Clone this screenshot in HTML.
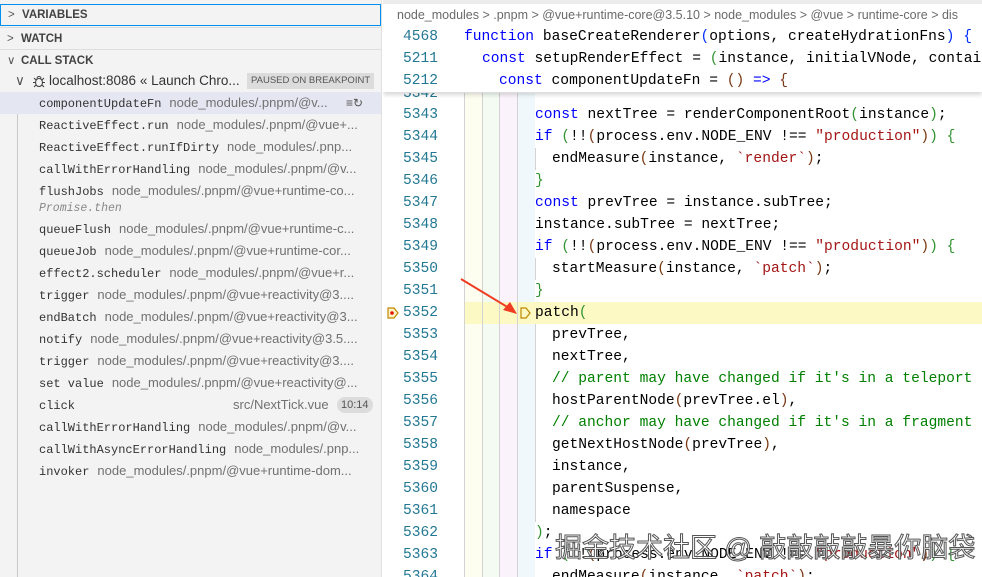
<!DOCTYPE html>
<html><head><meta charset="utf-8"><style>
*{margin:0;padding:0;box-sizing:border-box}
body{width:982px;height:577px;overflow:hidden;background:#fff;font-family:"Liberation Sans",sans-serif;position:relative}
#side{position:absolute;left:0;top:0;width:382px;height:577px;background:#f3f3f3;border-right:1px solid #e0e0e0;overflow:hidden}
.hdr{position:absolute;left:0;width:381px;height:22px;font-size:11.5px;font-weight:bold;color:#424242;line-height:22px;padding-left:21px}
.hdr .ch{position:absolute;left:7px;top:0;font-weight:normal;color:#555}
.row{position:absolute;left:0;width:381px;height:22px;line-height:22px;white-space:nowrap;font-size:13px;color:#717171}
.row .f{font-family:"Liberation Mono",monospace;font-size:12px;color:#333;margin-right:8px}
.row .n{position:absolute;left:39px;top:0}
.guide{position:absolute;left:17px;top:92px;width:1px;height:485px;background:#c8c8c8}
#ed{position:absolute;left:383px;top:0;width:599px;height:577px;overflow:hidden}
.ln{position:absolute;left:0;width:55px;text-align:right;font-family:"Liberation Mono",monospace;font-size:14.6px;color:#237893;line-height:22px;height:22px}
.code{position:absolute;left:0;white-space:pre;font-family:"Liberation Mono",monospace;font-size:14.6px;line-height:22px;height:22px;color:#000}
.k{color:#0000ff}.s{color:#a31515}.c{color:#008000}.b1{color:#0431fa}.b2{color:#319331}.b3{color:#7b3814}
.col{position:absolute;top:92px;height:485px}
.vl{position:absolute;top:92px;height:485px;width:1px;background:#d3d3d3}
#body{position:absolute;left:0;top:1px;width:599px;height:577px}
</style></head><body>
<div id="side">
 <div class="hdr" style="top:4px;border:1px solid #0090f1;height:22px;line-height:20px"><span class="ch">&gt;</span>VARIABLES</div>
 <div class="hdr" style="top:27px;border-top:1px solid #ddd"><span class="ch">&gt;</span>WATCH</div>
 <div class="hdr" style="top:49px;border-top:1px solid #ddd"><span class="ch">&#8744;</span>CALL STACK</div>
 <div class="row" style="top:70px;color:#333;font-size:13.5px"><span style="position:absolute;left:15px;color:#555">&#8744;</span><svg style="position:absolute;left:32px;top:4px" width="14" height="14" viewBox="0 0 14 14" fill="none" stroke="#424242" stroke-width="1.1"><ellipse cx="7" cy="8.5" rx="3.5" ry="4"/><path d="M5 4.5a2 2 0 0 1 4 0M1 8.5h2.5M10.5 8.5H13M2 4l2 2M12 4l-2 2M2 13l2-2M12 13l-2-2"/></svg><span style="position:absolute;left:49px">localhost:8086 « Launch Chro...</span><span style="position:absolute;left:247px;top:3px;height:16px;line-height:16px;background:#dcdcdc;font-size:9.5px;padding:0 4px;color:#555">PAUSED ON BREAKPOINT</span></div>
 <div class="guide"></div>
 <div class="row" style="top:92px;background:#e4e6f1"><span class="n"><span class="f">componentUpdateFn</span>node_modules/.pnpm/@v...</span><span style="position:absolute;left:346px;color:#555;font-size:12px">&#8801;&#8635;</span></div>
 <div class="row" style="top:114px"><span class="n"><span class="f">ReactiveEffect.run</span>node_modules/.pnpm/@vue+...</span></div>
 <div class="row" style="top:136px"><span class="n"><span class="f">ReactiveEffect.runIfDirty</span>node_modules/.pnp...</span></div>
 <div class="row" style="top:158px"><span class="n"><span class="f">callWithErrorHandling</span>node_modules/.pnpm/@v...</span></div>
 <div class="row" style="top:180px"><span class="n"><span class="f">flushJobs</span>node_modules/.pnpm/@vue+runtime-co...</span></div>
 <div class="row" style="top:199px;height:20px;line-height:20px"><span class="n" style="font-family:'Liberation Mono',monospace;font-style:italic;font-size:11.5px;color:#888">Promise.then</span></div>
 <div class="row" style="top:218px"><span class="n"><span class="f">queueFlush</span>node_modules/.pnpm/@vue+runtime-c...</span></div>
 <div class="row" style="top:240px"><span class="n"><span class="f">queueJob</span>node_modules/.pnpm/@vue+runtime-cor...</span></div>
 <div class="row" style="top:262px"><span class="n"><span class="f">effect2.scheduler</span>node_modules/.pnpm/@vue+r...</span></div>
 <div class="row" style="top:284px"><span class="n"><span class="f">trigger</span>node_modules/.pnpm/@vue+reactivity@3....</span></div>
 <div class="row" style="top:306px"><span class="n"><span class="f">endBatch</span>node_modules/.pnpm/@vue+reactivity@3...</span></div>
 <div class="row" style="top:328px"><span class="n"><span class="f">notify</span>node_modules/.pnpm/@vue+reactivity@3.5....</span></div>
 <div class="row" style="top:350px"><span class="n"><span class="f">trigger</span>node_modules/.pnpm/@vue+reactivity@3....</span></div>
 <div class="row" style="top:372px"><span class="n"><span class="f">set value</span>node_modules/.pnpm/@vue+reactivity@...</span></div>
 <div class="row" style="top:394px"><span class="n"><span class="f">click</span></span><span style="position:absolute;left:233px">src/NextTick.vue</span><span style="position:absolute;left:337px;top:3px;height:16px;line-height:16px;background:#dcdcdc;border-radius:8px;padding:0 4px;font-size:11px;color:#555">10:14</span></div>
 <div class="row" style="top:416px"><span class="n"><span class="f">callWithErrorHandling</span>node_modules/.pnpm/@v...</span></div>
 <div class="row" style="top:438px"><span class="n"><span class="f">callWithAsyncErrorHandling</span>node_modules/.pnp...</span></div>
 <div class="row" style="top:460px"><span class="n"><span class="f">invoker</span>node_modules/.pnpm/@vue+runtime-dom...</span></div>
</div>
<div id="ed">
 <div style="position:absolute;left:0;top:0;width:599px;height:4px;background:#ececec"></div>
 <div id="body">
 <div class="col" style="left:81px;width:18px;background:#fdfdf0"></div>
 <div class="col" style="left:99px;width:17px;background:#f3fbf3"></div>
 <div class="col" style="left:116px;width:18px;background:#fbf3fb"></div>
 <div class="col" style="left:134px;width:18px;background:#f0f8fc"></div>
 <div style="position:absolute;left:81px;top:301px;width:518px;height:22px;background:#fdf9c4"></div>
 <div class="vl" style="left:81px"></div><div class="vl" style="left:99px"></div><div class="vl" style="left:116px"></div><div class="vl" style="left:134px"></div>
 <div class="vl" style="left:152px;top:147px;height:22px"></div><div class="vl" style="left:152px;top:257px;height:22px"></div><div class="vl" style="left:152px;top:323px;height:198px"></div>
 <div class="ln" style="top:92px;height:10px;line-height:2px;overflow:hidden">5342</div>
 <div class="ln" style="top:103px">5343</div><div class="code" style="top:103px;left:152px"><span class="k">const</span> nextTree = renderComponentRoot<span class="b2">(</span>instance<span class="b2">)</span>;</div>
 <div class="ln" style="top:125px">5344</div><div class="code" style="top:125px;left:152px"><span class="k">if</span> <span class="b2">(</span>!!<span class="b3">(</span>process.env.NODE_ENV !== <span class="s">"production"</span><span class="b3">)</span><span class="b2">)</span> <span class="b2">{</span></div>
 <div class="ln" style="top:147px">5345</div><div class="code" style="top:147px;left:169px">endMeasure<span class="b3">(</span>instance, <span class="s">`render`</span><span class="b3">)</span>;</div>
 <div class="ln" style="top:169px">5346</div><div class="code" style="top:169px;left:152px"><span class="b2">}</span></div>
 <div class="ln" style="top:191px">5347</div><div class="code" style="top:191px;left:152px"><span class="k">const</span> prevTree = instance.subTree;</div>
 <div class="ln" style="top:213px">5348</div><div class="code" style="top:213px;left:152px">instance.subTree = nextTree;</div>
 <div class="ln" style="top:235px">5349</div><div class="code" style="top:235px;left:152px"><span class="k">if</span> <span class="b2">(</span>!!<span class="b3">(</span>process.env.NODE_ENV !== <span class="s">"production"</span><span class="b3">)</span><span class="b2">)</span> <span class="b2">{</span></div>
 <div class="ln" style="top:257px">5350</div><div class="code" style="top:257px;left:169px">startMeasure<span class="b3">(</span>instance, <span class="s">`patch`</span><span class="b3">)</span>;</div>
 <div class="ln" style="top:279px">5351</div><div class="code" style="top:279px;left:152px"><span class="b2">}</span></div>
 <div class="ln" style="top:301px">5352</div><div class="code" style="top:301px;left:152px">patch<span class="b2">(</span></div>
 <svg style="position:absolute;left:3px;top:305px" width="14" height="14" viewBox="0 0 14 14"><path d="M2 2h6l4 5-4 5H2z" fill="#fff3c4" stroke="#be8700" stroke-width="1.2"/><circle cx="6" cy="7" r="1.8" fill="#e51400"/></svg>
 <svg style="position:absolute;left:136px;top:305px" width="14" height="14" viewBox="0 0 14 14"><path d="M2 2h5l4 5-4 5H2z" fill="none" stroke="#be8700" stroke-width="1.2"/></svg>
 <svg style="position:absolute;left:76px;top:276px" width="62" height="40"><path d="M2 2L55 34" stroke="#f03c20" stroke-width="2"/><path d="M58 37L44 33L51 25z" fill="#f03c20"/></svg>
 <div class="ln" style="top:323px">5353</div><div class="code" style="top:323px;left:169px">prevTree,</div>
 <div class="ln" style="top:345px">5354</div><div class="code" style="top:345px;left:169px">nextTree,</div>
 <div class="ln" style="top:367px">5355</div><div class="code c" style="top:367px;left:169px">// parent may have changed if it's in a teleport</div>
 <div class="ln" style="top:389px">5356</div><div class="code" style="top:389px;left:169px">hostParentNode<span class="b3">(</span>prevTree.el<span class="b3">)</span>,</div>
 <div class="ln" style="top:411px">5357</div><div class="code c" style="top:411px;left:169px">// anchor may have changed if it's in a fragment</div>
 <div class="ln" style="top:433px">5358</div><div class="code" style="top:433px;left:169px">getNextHostNode<span class="b3">(</span>prevTree<span class="b3">)</span>,</div>
 <div class="ln" style="top:455px">5359</div><div class="code" style="top:455px;left:169px">instance,</div>
 <div class="ln" style="top:477px">5360</div><div class="code" style="top:477px;left:169px">parentSuspense,</div>
 <div class="ln" style="top:499px">5361</div><div class="code" style="top:499px;left:169px">namespace</div>
 <div class="ln" style="top:521px">5362</div><div class="code" style="top:521px;left:152px"><span class="b2">)</span>;</div>
 <div class="ln" style="top:543px">5363</div><div class="code" style="top:543px;left:152px"><span class="k">if</span> <span class="b2">(</span>!!<span class="b3">(</span>process.env.NODE_ENV !== <span class="s">"production"</span><span class="b3">)</span><span class="b2">)</span> <span class="b2">{</span></div>
 <div class="ln" style="top:565px">5364</div><div class="code" style="top:565px;left:169px">endMeasure<span class="b3">(</span>instance, <span class="s">`patch`</span><span class="b3">)</span>;</div>
 </div>
 <div style="position:absolute;left:0;top:0;width:599px;height:4px;background:#ececec"></div>
 <div style="position:absolute;left:0;top:4px;width:599px;height:22px;background:#fff"></div>
 <div style="position:absolute;left:14px;top:8px;font-size:12.5px;color:#6a6a6a;white-space:nowrap">node_modules &gt; .pnpm &gt; @vue+runtime-core@3.5.10 &gt; node_modules &gt; @vue &gt; runtime-core &gt; dis</div>
 <div style="position:absolute;left:0;top:26px;width:599px;height:66px;background:#fff;box-shadow:0 3px 4px rgba(0,0,0,0.15)">
  <div class="ln" style="top:0">4568</div><div class="code" style="top:0;left:81px"><span class="k">function</span> baseCreateRenderer<span class="b1">(</span>options, createHydrationFns<span class="b1">)</span> <span class="b1">{</span></div>
  <div class="ln" style="top:22px">5211</div><div class="code" style="top:22px;left:99px"><span class="k">const</span> setupRenderEffect = <span class="b2">(</span>instance, initialVNode, contai</div>
  <div class="ln" style="top:44px">5212</div><div class="code" style="top:44px;left:116px"><span class="k">const</span> componentUpdateFn = <span class="b3">()</span> <span class="k">=&gt;</span> <span class="b3">{</span></div>
 </div>
 <div style="position:absolute;left:172px;top:526px;font-family:'Liberation Sans','Noto Sans CJK SC',sans-serif;font-size:27px;color:rgba(255,255,255,0.85);-webkit-text-stroke:1px #555;white-space:nowrap">掘金技术社区 @ 敲敲敲敲暴你脑袋</div>
</div>
</body></html>
